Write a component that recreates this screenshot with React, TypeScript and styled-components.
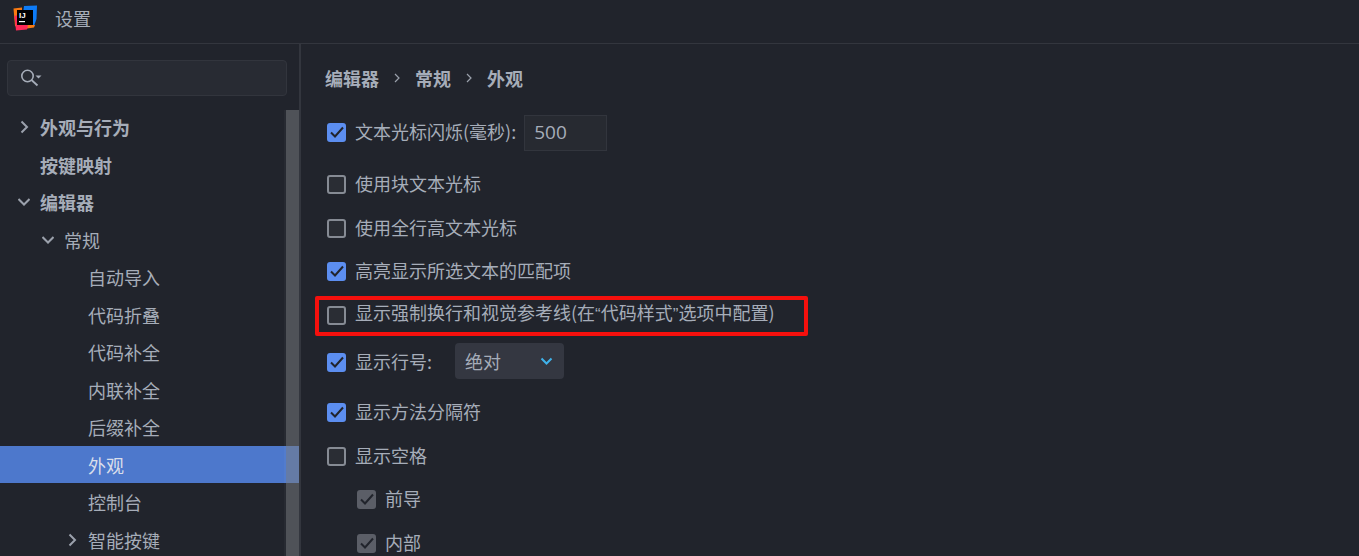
import React from 'react'
import styled, { createGlobalStyle } from 'styled-components'

const GlobalStyle = createGlobalStyle`
  html, body {
    margin: 0;
    padding: 0;
    height: 100%;
    overflow: hidden;
    background: #21242c;
  }
  * {
    box-sizing: border-box;
  }
`

const FONT = `"Noto Sans CJK SC", "Noto Sans", sans-serif`

const Page = styled.div`
  width: 1359px;
  height: 556px;
  overflow: hidden;
  display: flex;
  flex-direction: column;
  background: #21242c;
  color: #a6adb9;
  font-family: ${FONT};
  font-size: 18px;
`

const TitleBar = styled.div`
  flex: 0 0 44px;
  display: flex;
  align-items: center;
  padding: 0 0 7px 12px;
  gap: 17px;
  border-bottom: 1px solid #33363e;
`

const Title = styled.span`
  font-size: 18px;
  line-height: 24px;
  padding-bottom: 1px;
  color: #a6adb9;
`

const Body = styled.div`
  flex: 1;
  display: flex;
  min-height: 0;
`

const Sidebar = styled.div`
  position: relative;
  flex: 0 0 301px;
  border-right: 2px solid #33363e;
  padding-top: 16px;
  overflow: hidden;
`

const SearchBox = styled.div`
  margin: 0 12px 0 7px;
  height: 36px;
  display: flex;
  align-items: center;
  padding-left: 13px;
  background: #282b33;
  border: 1px solid #32353d;
  border-radius: 4px;
`

const Tree = styled.div`
  margin-top: 12px;
  display: flex;
  flex-direction: column;
`

const TreeRow = styled.div<{ $level: number; $selected?: boolean; $bold?: boolean }>`
  position: relative;
  flex: 0 0 37.5px;
  display: flex;
  align-items: center;
  padding-top: 1px;
  padding-left: ${({ $level }) => 40 + $level * 24}px;
  background: ${({ $selected }) => ($selected ? '#4d78cc' : 'transparent')};
  color: ${({ $selected }) => ($selected ? '#d9deea' : '#a6adb9')};
  font-weight: ${({ $bold }) => ($bold ? 700 : 400)};
  line-height: 24px;
`

const Arrow = styled.svg`
  position: absolute;
  width: 12px;
  height: 14px;
  margin-left: -22px;
`

const ScrollTrack = styled.div`
  position: absolute;
  top: 66px;
  right: 0;
  bottom: 0;
  width: 15px;
  padding-left: 2px;
  background: rgba(255, 255, 255, 0.03);
`

const ScrollThumb = styled.div`
  height: 100%;
  background: rgba(120, 122, 126, 0.5);
`

const Content = styled.div`
  flex: 1;
  padding: 19px 0 0 24px;
  display: flex;
  flex-direction: column;
`

const Breadcrumb = styled.div`
  flex: 0 0 30px;
  display: flex;
  align-items: center;
  font-weight: 700;
  font-size: 18px;
  color: #a6adb9;
`

const Crumb = styled.span`
  line-height: 24px;
`

const CrumbSep = styled.svg`
  width: 8px;
  height: 12px;
  margin: 0 14px;
`

const Row = styled.div<{ $top: number; $indent?: boolean }>`
  position: relative;
  flex: 0 0 30px;
  min-height: 0;
  margin-top: ${({ $top }) => $top}px;
  margin-left: ${({ $indent }) => ($indent ? 32 : 2)}px;
  display: flex;
  align-items: center;
  gap: 9px;
`

const Box = styled.div<{ $checked?: boolean; $disabled?: boolean }>`
  flex: 0 0 19px;
  width: 19px;
  height: 19px;
  border-radius: 3px;
  display: flex;
  align-items: center;
  justify-content: center;
  background: ${({ $checked, $disabled }) =>
    $disabled ? '#5b5e67' : $checked ? '#5c8ef0' : '#2a2d34'};
  border: ${({ $checked, $disabled }) =>
    $checked || $disabled ? 'none' : '2px solid #868b94'};
`

const Check = styled.svg`
  width: 16px;
  height: 16px;
`

const Label = styled.span`
  line-height: 24px;
  padding-bottom: 3px;
  white-space: nowrap;
  color: #a6adb9;
`

const Quote = styled.span`
  font-family: "Liberation Sans", sans-serif;
  font-size: 17px;
`

const NumberField = styled.div`
  width: 83px;
  height: 36px;
  margin-left: -1px;
  margin-top: 2px;
  display: flex;
  align-items: center;
  padding: 0 0 2px 9px;
  background: #272a31;
  border: 1px solid #32353d;
  font-family: "Open Sans", sans-serif;
  font-size: 19px;
  color: #a6adb9;
`

const Select = styled.div`
  width: 109px;
  height: 36px;
  margin-left: 14px;
  margin-top: -2px;
  display: flex;
  align-items: center;
  justify-content: space-between;
  padding: 0 11px 0 10px;
  background: #343741;
  border-radius: 4px;
  color: #a6adb9;
`

const Chevron = styled.svg`
  width: 13px;
  height: 9px;
`

const Highlight = styled.div`
  position: absolute;
  left: -12px;
  top: -4px;
  width: 493px;
  height: 40px;
  border: 4px solid #f5100d;
  border-radius: 2px;
  pointer-events: none;
`

const tree = [
  { label: '外观与行为', level: 0, bold: true, arrow: 'right' },
  { label: '按键映射', level: 0, bold: true },
  { label: '编辑器', level: 0, bold: true, arrow: 'down' },
  { label: '常规', level: 1, arrow: 'down' },
  { label: '自动导入', level: 2 },
  { label: '代码折叠', level: 2 },
  { label: '代码补全', level: 2 },
  { label: '内联补全', level: 2 },
  { label: '后缀补全', level: 2 },
  { label: '外观', level: 2, selected: true },
  { label: '控制台', level: 2 },
  { label: '智能按键', level: 2, arrow: 'right' },
]

function TreeArrow({ dir }: { dir: string }) {
  return (
    <Arrow viewBox="0 0 12 14" fill="none" stroke="#9ba1ac" strokeWidth="2">
      {dir === 'right' ? <path d="M3.5 1.5 L9 7 L3.5 12.5" /> : <path d="M0.5 4 L6 9.5 L11.5 4" />}
    </Arrow>
  )
}

function Tick() {
  return (
    <Check viewBox="0 0 16 16" fill="none" stroke="#21242c" strokeWidth="2">
      <path d="M2 8.5 L6 12.5 L14 3.5" />
    </Check>
  )
}

function Sep() {
  return (
    <CrumbSep viewBox="0 0 8 12" fill="none" stroke="#9ba1ac" strokeWidth="1.2">
      <path d="M2 2 L6 6 L2 10" />
    </CrumbSep>
  )
}

function Logo() {
  return (
    <svg width="26" height="26" viewBox="0 0 26 26">
      <path d="M12 1 L25 0.5 L24.5 14 L22 21 L10 18 Z" fill="#0d7bf7" />
      <path d="M1.5 3.5 L10 2.5 L10 10 L5 22 L3 21 Z" fill="#f97a12" />
      <path d="M14 20 H23 L22 22.5 L15 23.5 Z" fill="#f97a12" />
      <path d="M2.5 11 L6 10 L16 20 L15 24.5 L4 25.5 Z" fill="#fe2857" />
      <rect x="5" y="5" width="16" height="15" fill="#000" />
      <text x="7" y="12.5" fontSize="8" fontWeight="700" fill="#fff" fontFamily="Liberation Sans, sans-serif">
        IJ
      </text>
      <rect x="7" y="16" width="6" height="1.2" fill="#fff" />
    </svg>
  )
}

export default function App() {
  return (
    <Page>
      <GlobalStyle />
      <TitleBar>
        <Logo />
        <Title>设置</Title>
      </TitleBar>
      <Body>
        <Sidebar>
          <SearchBox>
            <svg width="22" height="18" viewBox="0 0 22 18" fill="none">
              <circle cx="6.5" cy="7" r="5.7" stroke="#a6adb9" strokeWidth="1.6" />
              <path d="M10.5 11 L16.5 16.5" stroke="#a6adb9" strokeWidth="1.8" />
              <path d="M14.5 6.5 H20.5 L17.5 9.5 Z" fill="#a6adb9" />
            </svg>
          </SearchBox>
          <Tree>
            {tree.map((item) => (
              <TreeRow key={item.label} $level={item.level} $bold={item.bold} $selected={item.selected}>
                {item.arrow && <TreeArrow dir={item.arrow} />}
                {item.label}
              </TreeRow>
            ))}
          </Tree>
          <ScrollTrack>
            <ScrollThumb />
          </ScrollTrack>
        </Sidebar>
        <Content>
          <Breadcrumb>
            <Crumb>编辑器</Crumb>
            <Sep />
            <Crumb>常规</Crumb>
            <Sep />
            <Crumb>外观</Crumb>
          </Breadcrumb>
          <Row $top={24}>
            <Box $checked><Tick /></Box>
            <Label>文本光标闪烁(毫秒):</Label>
            <NumberField>500</NumberField>
          </Row>
          <Row $top={22}>
            <Box />
            <Label>使用块文本光标</Label>
          </Row>
          <Row $top={14}>
            <Box />
            <Label>使用全行高文本光标</Label>
          </Row>
          <Row $top={13}>
            <Box $checked><Tick /></Box>
            <Label>高亮显示所选文本的匹配项</Label>
          </Row>
          <Row $top={14}>
            <Box />
            <Label>显示强制换行和视觉参考线(在<Quote>“</Quote>代码样式<Quote>”</Quote>选项中配置)</Label>
            <Highlight />
          </Row>
          <Row $top={17}>
            <Box $checked><Tick /></Box>
            <Label>显示行号:</Label>
            <Select>
              绝对
              <Chevron viewBox="0 0 13 9" fill="none" stroke="#3fb2ea" strokeWidth="2">
                <path d="M1.5 1.5 L6.5 6.5 L11.5 1.5" />
              </Chevron>
            </Select>
          </Row>
          <Row $top={20}>
            <Box $checked><Tick /></Box>
            <Label>显示方法分隔符</Label>
          </Row>
          <Row $top={14}>
            <Box />
            <Label>显示空格</Label>
          </Row>
          <Row $top={13} $indent>
            <Box $disabled><Tick /></Box>
            <Label>前导</Label>
          </Row>
          <Row $top={14} $indent>
            <Box $disabled><Tick /></Box>
            <Label>内部</Label>
          </Row>
        </Content>
      </Body>
    </Page>
  )
}
